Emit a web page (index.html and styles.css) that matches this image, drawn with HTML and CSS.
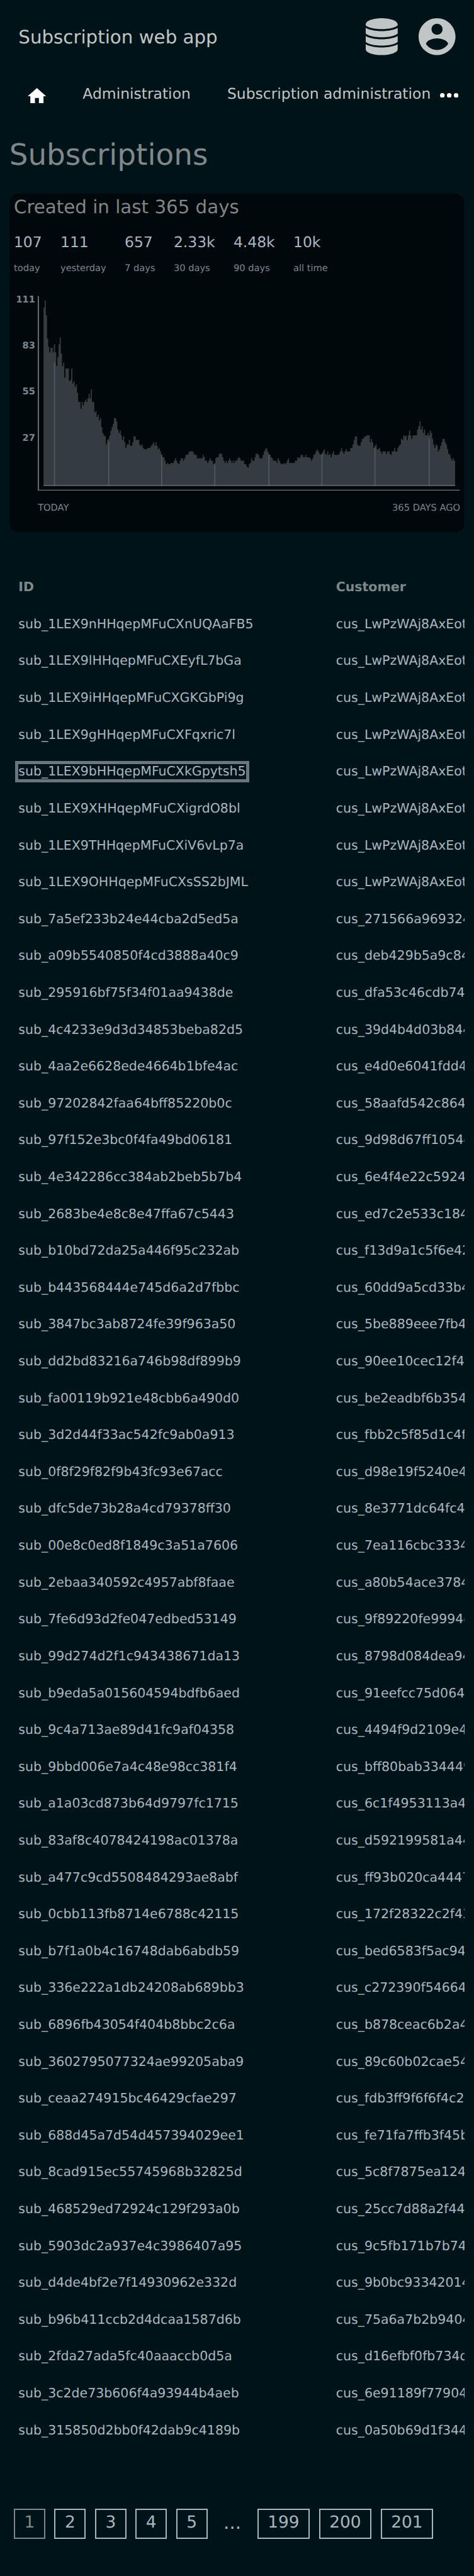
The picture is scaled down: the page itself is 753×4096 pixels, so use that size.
FILE: index.html
```html
<!DOCTYPE html>
<html lang="en">
<head>
<meta charset="utf-8">
<title>Subscriptions</title>
<link rel="stylesheet" href="styles.css">
</head>
<body>
<header class="topbar">
  <div class="brand">Subscription web app</div>
  <div class="tools">
    <svg class="icon-db" viewBox="0 0 97 112"><path d="M0 19C0 8 21 0 48.500 0S97 8 97 19V22C88 29 70 33 48.500 33S9 29 0 22ZM0 29C10 35 28 39 48.500 39S87 35 97 29V47C88 54 70 58 48.500 58S9 54 0 47ZM0 54C10 60 28 64 48.500 64S87 60 97 54V72C88 79 70 83 48.500 83S9 79 0 72ZM0 79C10 85 28 89 48.500 89S87 85 97 79V94C97 104 75 112 48.500 112S0 104 0 94Z"/></svg>
    <svg class="icon-user" viewBox="2 2 20 20"><path d="M12 2C6.480 2 2 6.480 2 12s4.480 10 10 10 10-4.480 10-10S17.520 2 12 2zm0 3c1.660 0 3 1.340 3 3s-1.340 3-3 3-3-1.340-3-3 1.340-3 3-3zm0 14.200c-2.500 0-4.710-1.280-6-3.220.030-1.990 4-3.080 6-3.080 1.990 0 5.970 1.090 6 3.080-1.290 1.940-3.500 3.220-6 3.220z"/></svg>
  </div>
</header>
<nav class="nav">
  <svg class="icon-home" viewBox="0 0 56 47.500"><path d="M28 0L56 24.700H48V47.500H34V30H22V47.500H8V24.700H0Z"/></svg>
  <a class="nav-link">Administration</a>
  <a class="nav-link">Subscription administration</a>
  <svg class="icon-more" viewBox="0 0 56 14"><circle cx="7" cy="7" r="7"/><circle cx="28" cy="7" r="7"/><circle cx="49" cy="7" r="7"/></svg>
</nav>
<h1 class="title">Subscriptions</h1>
<section class="card">
  <h2 class="card-title">Created in last 365 days</h2>
  <div class="stats">
    <div class="stat"><b>107</b><span>today</span></div>
    <div class="stat"><b>111</b><span>yesterday</span></div>
    <div class="stat"><b>657</b><span>7 days</span></div>
    <div class="stat"><b>2.33k</b><span>30 days</span></div>
    <div class="stat"><b>4.48k</b><span>90 days</span></div>
    <div class="stat"><b>10k</b><span>all time</span></div>
  </div>
  <div class="chart">
    <div class="y-labels"><span>111</span><span>83</span><span>55</span><span>27</span></div>
    <svg class="plot" viewBox="0 0 1281 591.400">
      <path class="axis" d="M0 0H3.500V587.900H1281V591.400H0Z"/>
      <path class="bars" id="bars"/>
      <path class="marks" id="marks"/>
      <rect class="baseline" x="17.500" y="573.200" width="1249.500" height="3.500"/>
    </svg>
  </div>
  <div class="x-labels"><span>TODAY</span><span>365 DAYS AGO</span></div>
</section>
<section class="table">
  <div class="row head"><span>ID</span><span>Customer</span></div>
  <div class="row"><span>sub_1LEX9nHHqepMFuCXnUQAaFB5</span><span>cus_LwPzWAj8AxEot</span></div>
  <div class="row"><span>sub_1LEX9lHHqepMFuCXEyfL7bGa</span><span>cus_LwPzWAj8AxEot</span></div>
  <div class="row"><span>sub_1LEX9iHHqepMFuCXGKGbPi9g</span><span>cus_LwPzWAj8AxEot</span></div>
  <div class="row"><span>sub_1LEX9gHHqepMFuCXFqxric7l</span><span>cus_LwPzWAj8AxEot</span></div>
  <div class="row"><span><a class="focused">sub_1LEX9bHHqepMFuCXkGpytsh5</a></span><span>cus_LwPzWAj8AxEot</span></div>
  <div class="row"><span>sub_1LEX9XHHqepMFuCXigrdO8bl</span><span>cus_LwPzWAj8AxEot</span></div>
  <div class="row"><span>sub_1LEX9THHqepMFuCXiV6vLp7a</span><span>cus_LwPzWAj8AxEot</span></div>
  <div class="row"><span>sub_1LEX9OHHqepMFuCXsSS2bJML</span><span>cus_LwPzWAj8AxEot</span></div>
  <div class="row"><span>sub_7a5ef233b24e44cba2d5ed5a</span><span>cus_271566a969324</span></div>
  <div class="row"><span>sub_a09b5540850f4cd3888a40c9</span><span>cus_deb429b5a9c84</span></div>
  <div class="row"><span>sub_295916bf75f34f01aa9438de</span><span>cus_dfa53c46cdb74</span></div>
  <div class="row"><span>sub_4c4233e9d3d34853beba82d5</span><span>cus_39d4b4d03b844</span></div>
  <div class="row"><span>sub_4aa2e6628ede4664b1bfe4ac</span><span>cus_e4d0e6041fdd4</span></div>
  <div class="row"><span>sub_97202842faa64bff85220b0c</span><span>cus_58aafd542c864</span></div>
  <div class="row"><span>sub_97f152e3bc0f4fa49bd06181</span><span>cus_9d98d67ff1054d</span></div>
  <div class="row"><span>sub_4e342286cc384ab2beb5b7b4</span><span>cus_6e4f4e22c5924</span></div>
  <div class="row"><span>sub_2683be4e8c8e47ffa67c5443</span><span>cus_ed7c2e533c184</span></div>
  <div class="row"><span>sub_b10bd72da25a446f95c232ab</span><span>cus_f13d9a1c5f6e42</span></div>
  <div class="row"><span>sub_b443568444e745d6a2d7fbbc</span><span>cus_60dd9a5cd33b4</span></div>
  <div class="row"><span>sub_3847bc3ab8724fe39f963a50</span><span>cus_5be889eee7fb4</span></div>
  <div class="row"><span>sub_dd2bd83216a746b98df899b9</span><span>cus_90ee10cec12f4</span></div>
  <div class="row"><span>sub_fa00119b921e48cbb6a490d0</span><span>cus_be2eadbf6b354</span></div>
  <div class="row"><span>sub_3d2d44f33ac542fc9ab0a913</span><span>cus_fbb2c5f85d1c4f</span></div>
  <div class="row"><span>sub_0f8f29f82f9b43fc93e67acc</span><span>cus_d98e19f5240e4</span></div>
  <div class="row"><span>sub_dfc5de73b28a4cd79378ff30</span><span>cus_8e3771dc64fc4</span></div>
  <div class="row"><span>sub_00e8c0ed8f1849c3a51a7606</span><span>cus_7ea116cbc3334</span></div>
  <div class="row"><span>sub_2ebaa340592c4957abf8faae</span><span>cus_a80b54ace3784</span></div>
  <div class="row"><span>sub_7fe6d93d2fe047edbed53149</span><span>cus_9f89220fe9994d</span></div>
  <div class="row"><span>sub_99d274d2f1c943438671da13</span><span>cus_8798d084dea94</span></div>
  <div class="row"><span>sub_b9eda5a015604594bdfb6aed</span><span>cus_91eefcc75d064</span></div>
  <div class="row"><span>sub_9c4a713ae89d41fc9af04358</span><span>cus_4494f9d2109e4</span></div>
  <div class="row"><span>sub_9bbd006e7a4c48e98cc381f4</span><span>cus_bff80bab334449</span></div>
  <div class="row"><span>sub_a1a03cd873b64d9797fc1715</span><span>cus_6c1f4953113a4</span></div>
  <div class="row"><span>sub_83af8c4078424198ac01378a</span><span>cus_d592199581a44</span></div>
  <div class="row"><span>sub_a477c9cd5508484293ae8abf</span><span>cus_ff93b020ca4447</span></div>
  <div class="row"><span>sub_0cbb113fb8714e6788c42115</span><span>cus_172f28322c2f43</span></div>
  <div class="row"><span>sub_b7f1a0b4c16748dab6abdb59</span><span>cus_bed6583f5ac94</span></div>
  <div class="row"><span>sub_336e222a1db24208ab689bb3</span><span>cus_c272390f54664</span></div>
  <div class="row"><span>sub_6896fb43054f404b8bbc2c6a</span><span>cus_b878ceac6b2a4</span></div>
  <div class="row"><span>sub_3602795077324ae99205aba9</span><span>cus_89c60b02cae54</span></div>
  <div class="row"><span>sub_ceaa274915bc46429cfae297</span><span>cus_fdb3ff9f6f6f4c2</span></div>
  <div class="row"><span>sub_688d45a7d54d457394029ee1</span><span>cus_fe71fa7ffb3f45b</span></div>
  <div class="row"><span>sub_8cad915ec55745968b32825d</span><span>cus_5c8f7875ea124</span></div>
  <div class="row"><span>sub_468529ed72924c129f293a0b</span><span>cus_25cc7d88a2f44</span></div>
  <div class="row"><span>sub_5903dc2a937e4c3986407a95</span><span>cus_9c5fb171b7b74</span></div>
  <div class="row"><span>sub_d4de4bf2e7f14930962e332d</span><span>cus_9b0bc93342014</span></div>
  <div class="row"><span>sub_b96b411ccb2d4dcaa1587d6b</span><span>cus_75a6a7b2b9404</span></div>
  <div class="row"><span>sub_2fda27ada5fc40aaaccb0d5a</span><span>cus_d16efbf0fb734d</span></div>
  <div class="row"><span>sub_3c2de73b606f4a93944b4aeb</span><span>cus_6e91189f77904</span></div>
  <div class="row"><span>sub_315850d2bb0f42dab9c4189b</span><span>cus_0a50b69d1f344</span></div>
</section>
<div class="pages">
  <a class="page current">1</a><a class="page">2</a><a class="page">3</a><a class="page">4</a><a class="page">5</a><span class="gap">...</span><a class="page wide">199</a><a class="page wide">200</a><a class="page wide">201</a>
</div>
<script src="chart.js"></script>
</body>
</html>
```
FILE: styles.css
```css
/* 1rem = 100 design units */
html { font-size: 52.33px; background: #001318; }
* { box-sizing: border-box; }
body { margin: 0; width: 753px; height: 4096px; overflow: hidden; background: #001318; color: #a9b6c0; font-family: "DejaVu Sans", sans-serif; font-size: .392rem; text-rendering: geometricPrecision; }
svg { display: block; flex: none; }
.topbar { height: 2.24rem; padding: 0 .56rem; display: flex; align-items: center; justify-content: space-between; color: #c0c6c6; fill: #c0c6c6; }
.brand { font-size: .56rem; }
.tools { display: flex; gap: .64rem; }
.icon-db { width: .97rem; height: 1.12rem; }
.icon-user { width: 1.12rem; height: 1.12rem; }
.nav { height: 1.232rem; padding-left: .84rem; display: flex; align-items: center; color: #c0c6c6; font-size: .448rem; fill: #fff; white-space: nowrap; }
.icon-home { width: .56rem; height: .475rem; margin-top: .1rem; }
.nav-link { margin-left: 1.11rem; }
.icon-more { width: .56rem; height: .14rem; margin: .09rem 0 0 .28rem; }
.title { margin: 0; height: 2.408rem; padding: .1rem .28rem 0; line-height: 2.3rem; font-size: .896rem; font-weight: 400; color: #80888b; }
.card { margin: 0 .28rem; height: 10.29rem; padding: 0 .14rem; border-radius: .28rem; background: #00080b; color: #7a868f; font-size: .28rem; }
.card-title { margin: 0 0 .413rem; line-height: .82rem; font-size: .56rem; font-weight: 400; color: #808585; }
.stats { display: flex; gap: .56rem; height: 1.88rem; }
.stat { display: flex; flex-direction: column; gap: .37rem; }
.stat b { font-size: .448rem; line-height: .52rem; font-weight: 400; color: #a9b6c2; }
.stat span { line-height: .32rem; }
.chart { display: flex; gap: .085rem; margin-top: .005rem; }
.y-labels { width: .65rem; text-align: right; font-weight: 700; line-height: .24rem; }
.y-labels span { display: block; height: 1.4rem; }
.plot { width: 12.81rem; height: 5.914rem; }
.axis { fill: #6c757d; }
.bars { fill: #353c41; }
.marks { fill: #50575d; }
.baseline { fill: #7a8a95; fill-opacity: .5; }
.x-labels { display: flex; justify-content: space-between; margin: -.1rem 0 0 .73rem; line-height: .32rem; }
.chart { height: 6.394rem; }
.table { margin: 1.11rem .28rem 0; overflow: hidden; }
.row { display: grid; grid-template-columns: 9.64rem 5rem; padding-left: .28rem; line-height: 1.12rem; height: 1.12rem; white-space: nowrap; }
.head { font-weight: 700; color: #7d888b; }
.focused { display: inline-block; line-height: .456rem; outline: .112rem solid #6c757d; }
.pages { display: flex; margin: 1.83rem .42rem 0; gap: .28rem; font-size: .504rem; line-height: .78rem; }
.page { flex: none; width: .952rem; height: .91rem; border: 2px solid #a9b6c0; text-align: center; }
.wide { width: 1.595rem; }
.current { color: #80888b; border-color: #80888b; }
.gap { flex: none; width: .95rem; text-align: center; font-size: .56rem; line-height: .85rem; }
```
FILE: chart.js
```js
// Daily counts, one bar per day; heights are in grid steps of 3.5 units.
const heights = [
  155,161,148,128,121,116,120,120,116,123,116,104,112,123,129,115,104,107,94,102,102,102,91,92,102,89,91,86,88,81,
  73,73,67,73,70,73,75,73,76,80,76,84,73,73,64,65,60,62,57,59,51,46,44,43,36,40,41,44,48,51,
  54,59,59,56,49,46,48,44,40,43,38,33,36,36,40,35,35,38,43,43,40,40,40,36,35,36,33,32,32,32,
  33,33,33,35,36,38,35,38,35,32,33,30,27,25,25,22,19,20,19,19,20,20,20,22,24,22,20,19,22,24,
  24,22,24,27,27,28,30,30,30,30,28,27,27,24,24,24,24,24,27,25,22,22,20,22,24,22,22,19,20,24,
  25,25,28,28,28,25,22,20,22,20,22,24,22,20,22,20,22,22,24,25,24,22,22,22,19,19,17,16,19,20,
  24,22,22,25,28,28,27,24,24,24,27,30,32,33,30,28,27,25,24,22,22,22,20,24,22,20,19,19,20,19,
  20,22,24,20,20,20,20,20,22,22,25,24,25,27,27,25,25,27,25,25,25,24,22,24,27,28,30,32,30,28,
  27,28,30,32,28,27,30,27,28,25,28,30,27,27,27,27,28,30,33,30,28,30,32,30,30,30,33,33,36,40,
  43,43,36,35,35,38,41,41,43,43,44,44,44,38,41,38,33,35,36,32,32,33,30,28,30,30,30,28,30,30,
  28,27,30,30,33,30,30,33,35,36,41,40,44,43,44,40,44,48,44,41,44,44,44,44,49,52,56,49,52,46,
  49,44,44,46,44,48,46,41,36,33,36,35,30,32,35,38,41,41,38,36,32,28,27,24,22,24,22
];
const monthMarks = [[9,107],[56,38],[102,27],[148,19],[195,27],[241,28],[287,33],[334,41]];
const step = 3.5, left = 17.5, bottom = 576.7;
const bar = (i, h) => `M${left + i * step} ${bottom}v${-h * step}h${step}v${h * step}z`;
document.getElementById("bars").setAttribute("d",
  `M${left} ${bottom}` + heights.map(h => `V${bottom - h * step}h${step}`).join("") + `V${bottom}z`);
document.getElementById("marks").setAttribute("d", monthMarks.map(m => bar(m[0], m[1])).join(""));
```
